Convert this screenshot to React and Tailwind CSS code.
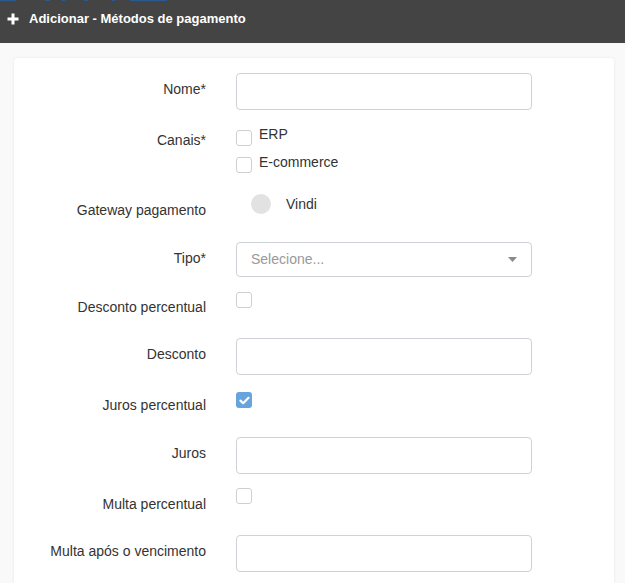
import React from 'react';

const Label = ({ children, pt = 'pt-[6px]' }) => (
    <div className={`w-[192px] shrink-0 text-right text-[14px] leading-[20px] text-[#333] ${pt}`}>{children}</div>
);

const TextInput = () => (
    <div className="w-[296px] h-[37px] bg-white border border-[#cfd2d6] rounded-[4px]" />
);

const Box = ({ checked }) =>
    checked ? (
        <span className="w-[16px] h-[16px] rounded-[3px] bg-[#67a3dd] flex items-center justify-center">
            <svg width="11" height="9" viewBox="0 0 11 9">
                <path d="M1.5 4.6 L4.2 7.2 L9.5 1.8" fill="none" stroke="white" strokeWidth="2.2" strokeLinecap="round" strokeLinejoin="round" />
            </svg>
        </span>
    ) : (
        <span className="w-[16px] h-[16px] rounded-[3px] bg-white border border-[#cfcfcf] block" />
    );

const App = () => {
    const strip = [[0, 16], [45, 5], [62, 3], [84, 4], [112, 3], [130, 37]];

    return (
        <div className="min-h-[583px] bg-[#f9f9f9] font-['Liberation_Sans',Arial,sans-serif]">
            <div className="h-[43px] bg-[#444444] relative">
                {strip.map(([x, w]) => (
                    <span key={x} className="absolute top-0 h-[1px] bg-[#2a5b8c]" style={{ left: x, width: w }} />
                ))}
                <div className="flex items-center pl-[7px] pt-[9px] text-white text-[13px] leading-[20px] font-bold">
                    <svg width="12" height="12" viewBox="0 0 12 12" className="mr-[10px]">
                        <path d="M6 0.5 V11.5 M0.5 6 H11.5" stroke="white" strokeWidth="3" />
                    </svg>
                    <span>Adicionar - Métodos de pagamento</span>
                </div>
            </div>

            <div className="ml-[14px] mt-[15px] w-[600px] h-[525px] bg-white rounded-t-[4px] shadow-[0_0_3px_rgba(0,0,0,0.08)] pt-[15px]">
                {/* Nome */}
                <div className="flex gap-[30px]">
                    <Label>Nome*</Label>
                    <TextInput />
                </div>

                {/* Canais */}
                <div className="flex gap-[30px] mt-[14px]">
                    <Label>Canais*</Label>
                    <div className="flex flex-col gap-[6px]">
                        <div className="flex items-start gap-[7px]">
                            <span className="mt-[6px]"><Box /></span>
                            <span className="text-[14px] leading-[20px] text-[#333]">ERP</span>
                        </div>
                        <div className="flex items-start gap-[7px]">
                            <span className="mt-[5px]"><Box /></span>
                            <span className="text-[14px] leading-[20px] text-[#333]">E-commerce</span>
                        </div>
                    </div>
                </div>

                {/* Gateway */}
                <div className="flex gap-[30px] mt-[20px]">
                    <Label pt="pt-[7px]">Gateway pagamento</Label>
                    <div className="self-start mt-[1px] flex items-center pl-[15px] gap-[15px]">
                        <span className="w-[20px] h-[20px] rounded-full bg-[#e2e2e2] block" />
                        <span className="text-[14px] leading-[20px] text-[#333]">Vindi</span>
                    </div>
                </div>

                {/* Tipo */}
                <div className="flex gap-[30px] mt-[22px]">
                    <Label>Tipo*</Label>
                    <div className="w-[296px] h-[35px] border border-[#cfd2d6] rounded-[4px] flex items-center justify-between pl-[14px] pr-[14px]">
                        <span className="text-[14px] text-[#999]">Selecione...</span>
                        <svg width="9" height="5" viewBox="0 0 9 5">
                            <path d="M0 0 H9 L4.5 5 Z" fill="#8a8a8a" />
                        </svg>
                    </div>
                </div>

                {/* Desconto percentual */}
                <div className="flex gap-[30px] mt-[15px]">
                    <Label pt="pt-[5px]">Desconto percentual</Label>
                    <Box />
                </div>

                {/* Desconto */}
                <div className="flex gap-[30px] mt-[21px]">
                    <Label>Desconto</Label>
                    <TextInput />
                </div>

                {/* Juros percentual */}
                <div className="flex gap-[30px] mt-[17px]">
                    <Label pt="pt-[3px]">Juros percentual</Label>
                    <Box checked />
                </div>

                {/* Juros */}
                <div className="flex gap-[30px] mt-[22px]">
                    <Label>Juros</Label>
                    <TextInput />
                </div>

                {/* Multa percentual */}
                <div className="flex gap-[30px] mt-[14px]">
                    <Label>Multa percentual</Label>
                    <Box />
                </div>

                {/* Multa após o vencimento */}
                <div className="flex gap-[30px] mt-[21px]">
                    <Label>Multa após o vencimento</Label>
                    <TextInput />
                </div>
            </div>
        </div>
    );
};

export default App;
